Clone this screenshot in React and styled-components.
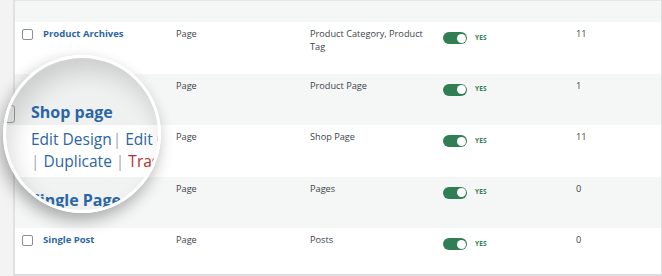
import React from 'react';
import styled, { createGlobalStyle } from 'styled-components';

const GlobalStyle = createGlobalStyle`
    html, body {
        margin: 0;
        padding: 0;
        background: #ffffff;
    }
    body {
        font-family: "Open Sans", "Liberation Sans", sans-serif;
    }
`;

const Frame = styled.div`
    position: relative;
    display: flex;
    width: 662px;
    height: 276px;
    overflow: hidden;
`;

const Gutter = styled.div`
    width: 13px;
    background: #f3f3f4;
    border-right: 2px solid #e0e1e2;
`;

const Table = styled.div`
    flex: 1;
    display: flex;
    flex-direction: column;
    background: #ffffff;
    border-top: 1px solid #e4e5e6;
    border-right: 1px solid #dcdcde;
    border-bottom: 2px solid #dcdcde;
`;

const HeaderStrip = styled.div`
    height: 21px;
    background: #f5f6f6;
`;

const Row = styled.div`
    display: grid;
    grid-template-columns: 21px 133px 134px 133px 133px 1fr;
    box-sizing: border-box;
    height: ${(props) => (props.$last ? 'auto' : '51.5px')};
    flex: ${(props) => (props.$last ? '1' : 'none')};
    padding: 6px 0 0 7px;
    background: ${(props) => (props.$striped ? '#f5f6f6' : '#ffffff')};
    font-size: 9.2px;
    line-height: 12.5px;
    color: #3c434a;
`;

const Checkbox = styled.span`
    display: block;
    width: 11px;
    height: 11px;
    margin-top: 1px;
    box-sizing: border-box;
    border: 1px solid #8c8f94;
    border-radius: 2px;
    background: #ffffff;
`;

const Title = styled.a`
    font-size: 9.5px;
    font-weight: 700;
    color: #2a65a6;
    text-decoration: none;
`;

const Cell = styled.div`
    padding-right: 10px;
`;

const ToggleCell = styled.div`
    display: flex;
    align-items: center;
    gap: 8px;
    margin-top: 4px;
    height: 12px;
`;

const Track = styled.span`
    display: flex;
    align-items: center;
    justify-content: flex-end;
    box-sizing: border-box;
    width: 24px;
    height: 12px;
    padding: 0 1.5px;
    border-radius: 6px;
    background: #317e54;
`;

const Knob = styled.span`
    width: 9px;
    height: 9px;
    border-radius: 50%;
    background: #ffffff;
`;

const Yes = styled.span`
    font-size: 6.5px;
    font-weight: 700;
    color: #317e54;
    letter-spacing: 0.2px;
`;

const Magnifier = styled.div`
    position: absolute;
    left: 3px;
    top: 55px;
    width: 158px;
    height: 158px;
    box-sizing: border-box;
    border: 3px solid #ffffff;
    border-radius: 50%;
    overflow: hidden;
    background: linear-gradient(
        to bottom,
        #eff0f0 0,
        #eff0f0 67px,
        #ffffff 67px,
        #ffffff 119px,
        #f1f2f2 119px
    );
    box-shadow: -3px 7px 16px rgba(0, 0, 0, 0.32), inset 6px 14px 22px rgba(0, 0, 0, 0.14);
`;

const MagContent = styled.div`
    padding: 42px 0 0 25px;
    white-space: nowrap;
`;

const MagTitleRow = styled.div`
    display: flex;
    align-items: center;
    height: 24px;
    margin-top: ${(props) => props.$gap || '0'};
`;

const MagCheck = styled.span`
    flex-shrink: 0;
    width: 18px;
    height: 18px;
    box-sizing: border-box;
    margin: 4px 16px 0 -34px;
    border: 1.8px solid #8c8f94;
    border-radius: 3px;
`;

const MagTitle = styled.span`
    font-size: 16px;
    font-weight: 700;
    line-height: 24px;
    color: #2a65a6;
`;

const MagActions = styled.div`
    margin-top: ${(props) => props.$gap || '0'};
    font-size: 15.5px;
    line-height: 22px;
    color: #2a65a6;
`;

const Pipe = styled.span`
    color: #a7aaad;
    margin: 0 4px 0 ${(props) => props.$left ?? 4}px;
`;

const Trash = styled.span`
    color: #b32d2e;
`;

const rows = [
    { title: 'Product Archives', type: 'Page', conditions: 'Product Category, Product Tag', count: '11', check: true },
    { title: '', type: 'Page', conditions: 'Product Page', count: '1' },
    { title: '', type: 'Page', conditions: 'Shop Page', count: '11' },
    { title: '', type: 'Page', conditions: 'Pages', count: '0' },
    { title: 'Single Post', type: 'Page', conditions: 'Posts', count: '0', check: true },
];

const App = () => {
    return (
        <>
            <GlobalStyle />
            <Frame>
                <Gutter />
                <Table>
                    <HeaderStrip />
                    {rows.map((row, i) => (
                        <Row key={i} $striped={i % 2 === 1} $last={i === rows.length - 1}>
                            <div>{row.check && <Checkbox />}</div>
                            <Cell>{row.title && <Title href="#">{row.title}</Title>}</Cell>
                            <Cell>{row.type}</Cell>
                            <Cell>{row.conditions}</Cell>
                            <ToggleCell>
                                <Track>
                                    <Knob />
                                </Track>
                                <Yes>YES</Yes>
                            </ToggleCell>
                            <Cell>{row.count}</Cell>
                        </Row>
                    ))}
                </Table>
                <Magnifier>
                    <MagContent>
                        <MagTitleRow>
                            <MagCheck />
                            <MagTitle>Shop page</MagTitle>
                        </MagTitleRow>
                        <MagActions $gap="4px">
                            Edit Design<Pipe $left={1}>|</Pipe>Edit Conditions
                        </MagActions>
                        <MagActions>
                            <Pipe $left={0}>|</Pipe>Duplicate<Pipe>|</Pipe><Trash>Trash</Trash>
                        </MagActions>
                        <MagTitleRow $gap="16px">
                            <MagTitle>Single Page</MagTitle>
                        </MagTitleRow>
                    </MagContent>
                </Magnifier>
            </Frame>
        </>
    );
};

export default App;
